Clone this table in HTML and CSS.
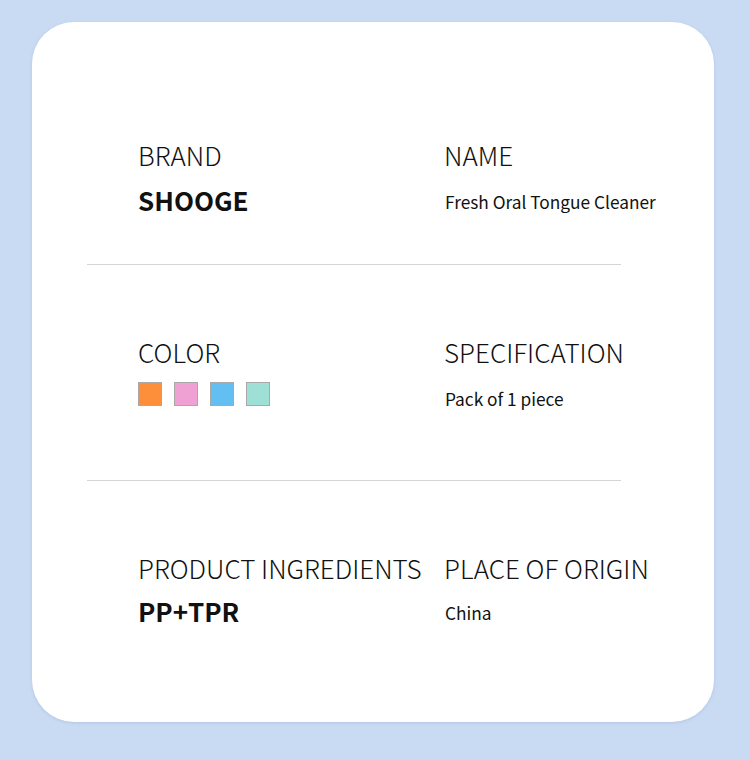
FILE: index.html
```html
<!DOCTYPE html>
<html>
<head>
<meta charset="utf-8">
<link rel="stylesheet" href="styles.css">
</head>
<body>
<div class="card">
  <div class="row row-first">
    <div class="cell">
      <div class="label">BRAND</div>
      <div class="value bold">SHOOGE</div>
    </div>
    <div class="cell">
      <div class="label">NAME</div>
      <div class="value small">Fresh Oral Tongue Cleaner</div>
    </div>
  </div>
  <div class="divider"></div>
  <div class="row row-mid">
    <div class="cell">
      <div class="label">COLOR</div>
      <div class="value swatches">
        <span class="swatch orange"></span>
        <span class="swatch pink"></span>
        <span class="swatch blue"></span>
        <span class="swatch teal"></span>
      </div>
    </div>
    <div class="cell">
      <div class="label">SPECIFICATION</div>
      <div class="value small">Pack of 1 piece</div>
    </div>
  </div>
  <div class="divider"></div>
  <div class="row row-last">
    <div class="cell">
      <div class="label">PRODUCT INGREDIENTS</div>
      <div class="value bold">PP+TPR</div>
    </div>
    <div class="cell">
      <div class="label">PLACE OF ORIGIN</div>
      <div class="value small">China</div>
    </div>
  </div>
</div>
</body>
</html>
```

FILE: styles.css
```css
html, body {
  margin: 0;
  padding: 0;
}
body {
  background: #c9daf3;
  width: 750px;
  height: 760px;
  padding-top: 22px;
  box-sizing: border-box;
  font-family: "Noto Sans CJK SC", "Noto Sans", sans-serif;
}
.card {
  margin-left: 32px;
  width: 682px;
  height: 700px;
  background: #ffffff;
  border-radius: 42px;
  box-sizing: border-box;
  box-shadow: 0 1px 3px rgba(120, 140, 180, 0.25);
}
.row {
  display: grid;
  grid-template-columns: 306px 1fr;
  padding-left: 106px;
}
.row-first {
  padding-top: 117px;
  padding-bottom: 48px;
}
.row-mid {
  padding-top: 71px;
  padding-bottom: 66px;
}
.row-last {
  padding-top: 71px;
}
.row-last .cell {
  gap: 11px;
}
.cell {
  display: flex;
  flex-direction: column;
  gap: 13px;
}
.label {
  font-size: 26px;
  font-weight: 300;
  line-height: 32px;
  color: #111;
  white-space: nowrap;
}
.value {
  height: 32px;
  line-height: 32px;
  color: #111;
  white-space: nowrap;
}
.bold {
  font-size: 26px;
  font-weight: 700;
}
.small {
  font-size: 17.3px;
  line-height: 36px;
  padding-left: 1px;
}
.divider {
  height: 1px;
  background: #d4d4d4;
  margin-left: 55px;
  margin-right: 93px;
}
.swatches {
  display: flex;
  align-items: flex-start;
  gap: 12px;
  padding-top: 1px;
}
.swatch {
  width: 22px;
  height: 22px;
  border: 1px solid #a9a9a9;
}
.orange { background: #fd8f3a; }
.pink { background: #f0a1d4; }
.blue { background: #63bff1; }
.teal { background: #9edfd6; }
```
